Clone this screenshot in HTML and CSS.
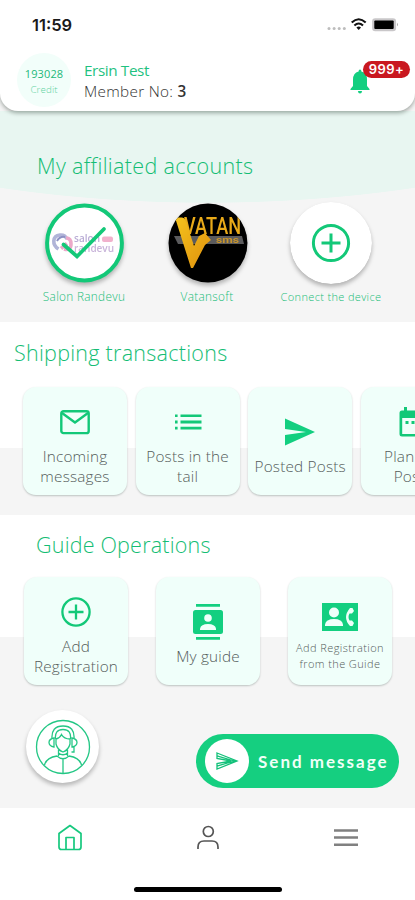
FILE: index.html
```html
<!DOCTYPE html>
<html lang="en">
<head>
<meta charset="utf-8">
<meta name="viewport" content="width=device-width, initial-scale=1">
<title>Messaging dashboard</title>
<link rel="stylesheet" href="styles.css">
</head>
<body>
<div class="app">
  <header class="header">
    <div class="status">
      <span class="clock">11:59</span>
      <svg class="status-icons" width="72" height="16" viewBox="0 0 72 16">
        <g fill="#bdbdbd"><circle cx="1" cy="12.500" r="1.500"/><circle cx="6.100" cy="12.500" r="1.500"/><circle cx="11.200" cy="12.500" r="1.500"/><circle cx="16.300" cy="12.500" r="1.500"/></g>
        <g fill="none" stroke="#111" stroke-width="2.100"><path d="M23.700 6.500Q30.700 0 37.700 6.500"/><path d="M26.400 9.500Q30.700 5.500 35 9.500"/></g>
        <path d="M28.400 11.500Q30.700 9.700 33 11.500L30.700 14Z" fill="#111"/>
        <rect x="44.100" y="2.200" width="24" height="13" rx="3.200" fill="#c9c7c9"/>
        <rect x="46.300" y="4.500" width="19.400" height="8.400" rx="1" fill="#000"/>
        <path d="M69 6.700q2 1.800 0 3.600z" fill="#aaa"/>
      </svg>
    </div>
    <div class="profile">
      <div class="credit"><span class="credit-num">193028</span><span class="credit-label">Credit</span></div>
      <div class="who"><div class="name">Ersin Test</div><div class="member">Member No: <b>3</b></div></div>
      <div class="bell">
        <svg width="20" height="25" viewBox="0 0 20 25" fill="#13cf80"><path d="M8.600 2.500Q8.600.5 10 .5t1.400 2Q17 4 17 10.500V17L19.500 20v1H.5v-1L3 17v-6.500Q3 4 8.600 2.500Z"/><path d="M7.900 22h4.200q-.3 2.500-2.100 2.500T7.900 22Z"/></svg>
        <span class="badge">999+</span>
      </div>
    </div>
  </header>

  <section class="accounts">
    <h2 class="title title-accounts">My affiliated accounts</h2>
    <div class="account-row">
      <div class="account">
        <svg class="avatar" width="82" height="82" viewBox="0 0 82 82">
          <circle cx="41.500" cy="41" r="37.400" fill="#fff" stroke="#13c878" stroke-width="4"/>
          <g fill="none" stroke-width="3.600"><path d="M15.500 47C9 43 9 34 17 33q5-.5 7 4" stroke="#b1b4d8"/><path d="M14 39q3-5 8-4" stroke="#8d91c4" stroke-width="2"/><path d="M18 46.500l6-5M21 47q7 2 7-5 0-6-5-6" stroke="#eca9c9"/></g>
          <text x="31" y="40" class="logo-salon" fill="#b9acd5" textLength="26">salon</text>
          <text x="31" y="50" class="logo-salon" fill="#c9b5da" textLength="40">randevu</text>
          <rect x="59" y="34.500" width="11" height="5.500" rx="2" fill="#f1b1cc"/>
          <path d="M20.500 42.500L34 54.500L61 27" fill="none" stroke="#13c878" stroke-width="3.800" stroke-linecap="round"/>
        </svg>
        <span class="account-name">Salon Randevu</span>
      </div>
      <div class="account account-vatan">
        <svg class="avatar" width="82" height="82" viewBox="0 0 82 82">
          <defs><clipPath id="disc"><circle cx="42" cy="41" r="39.500"/></clipPath><linearGradient id="gold" x1="0" y1="0" x2="1" y2="1"><stop offset="0" stop-color="#f5c31d"/><stop offset="1" stop-color="#df900d"/></linearGradient></defs>
          <circle cx="42" cy="41" r="39.500" fill="#000"/>
          <g clip-path="url(#disc)">
            <path d="M8 34H76L78 42H12Z" fill="#5b5b5d"/>
            <text x="18" y="32" class="logo-vatan" textLength="57" lengthAdjust="spacingAndGlyphs">VATAN</text>
            <path d="M9 15.500H16Q18.500 15.500 19.500 18L28 44L33 34L39 31L45 38L39 43L27 66H25Z" fill="url(#gold)"/>
            <text x="50" y="41" class="logo-sms" textLength="23" lengthAdjust="spacingAndGlyphs">sms</text>
          </g>
        </svg>
        <span class="account-name">Vatansoft</span>
      </div>
      <div class="account account-add">
        <svg class="avatar" width="82" height="82" viewBox="0 0 82 82"><circle cx="41" cy="41" r="41" fill="#fff"/><g fill="none" stroke="#13c878" stroke-width="3"><circle cx="41" cy="41" r="17.600"/><path d="M31.500 41h19M41 31.500v19"/></g></svg>
        <span class="account-name">Connect the device</span>
      </div>
    </div>
  </section>

  <section class="shipping">
    <h2 class="title title-shipping">Shipping transactions</h2>
    <div class="cards">
      <div class="card">
        <svg width="30" height="30" viewBox="0 0 30 30" fill="none" stroke="#13c878" stroke-width="2.400"><rect x="1.300" y="4.300" width="27.400" height="21.800" rx="2.200"/><path d="M2 6l13 9.500L28 6"/></svg>
        <span class="label">Incoming<br>messages</span>
      </div>
      <div class="card">
        <svg width="30" height="30" viewBox="0 0 30 30" fill="#13c878"><path d="M2 7.500h2.600v2.600H2zM7.500 7.500h21v2.600h-21zM2 13.500h2.600v3H2zM7.500 13.500h21v3h-21zM2 19.800h2.600v2.600H2zM7.500 19.800h21v2.600h-21z"/></svg>
        <span class="label">Posts in the<br>tail</span>
      </div>
      <div class="card">
        <svg width="30" height="30" viewBox="0 0 30 30" fill="#13cf80"><path d="M0 1.500L30 15L0 28.500V18L21 15L0 12Z"/></svg>
        <span class="label">Posted Posts</span>
      </div>
      <div class="card">
        <svg width="30" height="30" viewBox="0 0 30 30"><path d="M4 3.500h2V0h3v3.500h12V0h3v3.500h2a2.500 2.500 0 0 1 2.500 2.500v21a2.500 2.500 0 0 1-2.500 2.500H4A2.500 2.500 0 0 1 1.500 27V6A2.500 2.500 0 0 1 4 3.500zM4.200 11v16h21.600V11z" fill="#13c878" fill-rule="evenodd"/><path d="M7.500 14h3v3h-3zM13.500 14h3v3h-3zM19.500 14h3v3h-3z" fill="#13c878"/></svg>
        <span class="label">Planned<br>Posts</span>
      </div>
    </div>
  </section>

  <section class="guide">
    <h2 class="title title-guide">Guide Operations</h2>
    <div class="cards guide-cards">
      <div class="card">
        <svg width="30" height="30" viewBox="0 0 30 30" fill="none" stroke="#13c878" stroke-width="2.300"><circle cx="15" cy="15" r="13.600"/><path d="M7.500 15h15M15 7.500v15"/></svg>
        <span class="label">Add<br>Registration</span>
      </div>
      <div class="card card-guide">
        <svg width="30" height="36" viewBox="0 0 30 36"><path d="M3 0h24v2.700H3zM3 33h24v2.700H3z" fill="#13cf80"/><rect y="6" width="30" height="24" rx="2.500" fill="#13cf80"/><circle cx="15" cy="14" r="3.800" fill="#f0fffa"/><path d="M7 26v-1.500q1-4.500 8-4.500t8 4.500V26z" fill="#f0fffa"/></svg>
        <span class="label">My guide</span>
      </div>
      <div class="card card-small">
        <svg width="36" height="28" viewBox="0 0 36 28"><path fill="#13cf80" d="M0 0h36v28H0z"/><g fill="#f0fffa"><circle cx="12" cy="9.500" r="5"/><path d="M3 23v-1.500Q4 16 12 16t9 5.500V23z"/><path d="M30.500 5h-2.500q-8 9.500 0 18h2.500l1.500-3-2-2.500h-2.500q-2-3.500 0-7H30l2-2.500z"/></g></svg>
        <span class="label">Add Registration<br>from the Guide</span>
      </div>
    </div>
    <div class="actions">
      <div class="support">
        <svg width="56" height="56" viewBox="0 0 56 56" fill="none" stroke="#24c785" stroke-width="1.300"><circle cx="28" cy="28" r="26.500"/><path d="M17 20Q16 7 28 7t11 13M20.500 20q-1-9.500 7.500-9.500t7.500 9.500M21 20q4-1 5.500-4.500Q29 20 35 20v5q-1.500 6-7 8-5.500-2-7-8zM19 19q-5 1-5 4.500t5 4.500zM37 19q5 1 5 4.500t-5 4.500zM39 28v5h-2.500M23.500 31v6M32.500 31v6M23.500 34q4.500 3.500 9 0M22 37q6 5.500 12 0M9.500 46q2-7.500 12.500-9M34 37q10.500 1.500 12.500 9M28 40.500v14"/></svg>
      </div>
      <div class="send">
        <span class="send-icon"><svg width="24" height="22" viewBox="0 0 24 22" fill="none" stroke="#13c17a" stroke-width="1.300"><path d="M2 3L22 11L2 19V13.500L16 11L2 8.500ZM2 5.800L19 11L2 16.200"/></svg></span>
        <span class="send-text">Send message</span>
      </div>
    </div>
  </section>

  <nav class="nav">
    <div class="tabs">
      <svg width="26" height="28" viewBox="0 0 26 28" fill="none" stroke="#16c87e" stroke-width="1.700" stroke-linejoin="round"><path d="M2 9.500L13 1.500L24 9.500V23q0 2.500-2.500 2.500h-17Q2 25.500 2 23ZM9 25V13.500h8V25"/></svg>
      <svg width="24" height="28" viewBox="1.200 0 24 28" fill="none" stroke="#555" stroke-width="1.700"><circle cx="12.500" cy="7.500" r="5"/><path d="M2.200 25v-2q0-6 6-6h8q6 0 6 6v2"/></svg>
      <svg width="24" height="28" viewBox="0 0 24 28" fill="#808080"><path d="M0 5.200h24v2.500H0zM0 12.200h24v2.500H0zM0 19.400h24v2.500H0z"/></svg>
    </div>
    <div class="home-bar"></div>
  </nav>
</div>
</body>
</html>
```
FILE: styles.css
```css
* { box-sizing: border-box; }
body { margin: 0; font-family: "Open Sans", "Noto Sans", sans-serif; font-weight: 340; background: #fff; }
svg { display: block; flex: none; }
.app { width: 415px; height: 900px; overflow: hidden; display: flex; flex-direction: column; background: #f5f5f5; }

.header { position: relative; z-index: 1; height: 111px; background: #fff; border-radius: 0 0 18px 18px; box-shadow: 0 2px 4px rgba(0, 20, 10, .35); flex: none; }
.status { height: 51px; padding: 15px 15px 0 32px; display: flex; justify-content: space-between; }
.clock { font: 600 16.500px/20px Inter, sans-serif; color: #1a1a1a; }
.status-icons { margin-top: 1px; overflow: visible; }
.profile { display: flex; padding-left: 17px; }
.credit { width: 54px; height: 54px; margin-top: 2px; border-radius: 50%; background: #f2fefa; display: flex; flex-direction: column; align-items: center; padding-top: 13px; white-space: nowrap; }
.credit-num { font-size: 11px; line-height: 16px; font-weight: 400; color: #22b879; letter-spacing: .1px; }
.credit-label { font-size: 9.800px; line-height: 16px; color: #62d3a2; letter-spacing: .1px; }
.who { margin-left: 13px; padding-top: 9px; line-height: 21px; white-space: nowrap; font-size: 15.300px; }
.name { color: #1fc281; font-weight: 400; letter-spacing: -.4px; }
.member { color: #333; letter-spacing: .3px; }
.member b { font-weight: 600; }
.bell { position: relative; margin: 18px 45px 0 auto; }
.badge { position: absolute; left: 13px; top: -8px; width: 47px; height: 17px; border-radius: 9px; background: #c91820; color: #fff; font: 600 13px/17px Inter, sans-serif; letter-spacing: .4px; text-align: center; }

.title { margin: 0; font-size: 21.500px; line-height: 30px; font-weight: 330; color: #14bd74; white-space: nowrap; }
.accounts { height: 211px; padding-top: 40px; flex: none; background: radial-gradient(ellipse 560px 210px at 50% -118px, #e8f6f1 99.700%, #f5f5f5 100%); }
.title-accounts { padding-left: 37px; letter-spacing: .35px; }
.account-row { display: flex; padding: 21px 0 0 43px; gap: 41px; }
.account { width: 82px; display: flex; flex-direction: column; align-items: center; }
.account-add { margin-left: 1px; }
.avatar { border-radius: 50%; filter: drop-shadow(0 3px 2px rgba(0, 0, 0, .27)); }
.account-name { margin-top: 3px; font-size: 11.800px; line-height: 18px; color: #20bd79; white-space: nowrap; letter-spacing: .3px; }
.account-add .account-name { font-size: 11px; margin-top: 4px; letter-spacing: .35px; }
.logo-salon { font: 600 10px "Open Sans", sans-serif; }
.logo-vatan { font: 500 23px Roboto, sans-serif; fill: #e9aa19; }
.logo-sms { font: 700 9px Roboto, sans-serif; fill: #c8952b; }

.shipping { height: 193px; flex: none; padding-top: 16px; background: linear-gradient(#fff 126px, #f5f5f5 126px); }
.title-shipping { padding-left: 14px; letter-spacing: .27px; }
.cards { display: flex; gap: 8.600px; padding: 19px 0 0 23px; }
.card { width: 104px; height: 108px; flex: none; border-radius: 13px; background: #f0fffa; box-shadow: 0 1px 2px rgba(0, 30, 20, .23); display: flex; flex-direction: column; align-items: center; justify-content: center; gap: 9px; padding-top: 11px; }
.label { font-size: 15.300px; line-height: 20.500px; color: #555d5a; text-align: center; white-space: nowrap; letter-spacing: .2px; }
.guide { height: 293px; flex: none; padding-top: 15px; background: linear-gradient(#fff 122px, #f5f5f5 122px); }
.title-guide { padding-left: 36px; letter-spacing: .2px; }
.guide-cards { gap: 28px; padding: 17px 0 0 24px; }
.card-guide { gap: 6px; padding-top: 8px; }
.card-small { padding-top: 13px; }
.card-small .label { font-size: 11px; line-height: 16px; letter-spacing: .4px; }
.actions { display: flex; justify-content: space-between; padding: 25px 16px 0 26px; }
.support { width: 73px; height: 73px; border-radius: 50%; background: #fff; box-shadow: 0 3px 4px rgba(0, 0, 0, .25); display: grid; place-items: center; }
.send { margin-top: 24px; width: 203px; height: 54px; border-radius: 27px; background: #15cf80; display: flex; align-items: center; padding-left: 9px; }
.send-icon { width: 44px; height: 44px; border-radius: 50%; background: #fff; display: grid; place-items: center; }
.send-text { margin-left: 9px; font: 700 17px Lato, sans-serif; letter-spacing: 2px; color: #effff7; white-space: nowrap; }

.nav { height: 92px; flex: none; background: #fff; }
.tabs { height: 79px; padding: 16px 57px 0; display: flex; justify-content: space-between; }
.home-bar { width: 148px; height: 5px; margin: 0 auto; border-radius: 3px; background: #000; }
```
